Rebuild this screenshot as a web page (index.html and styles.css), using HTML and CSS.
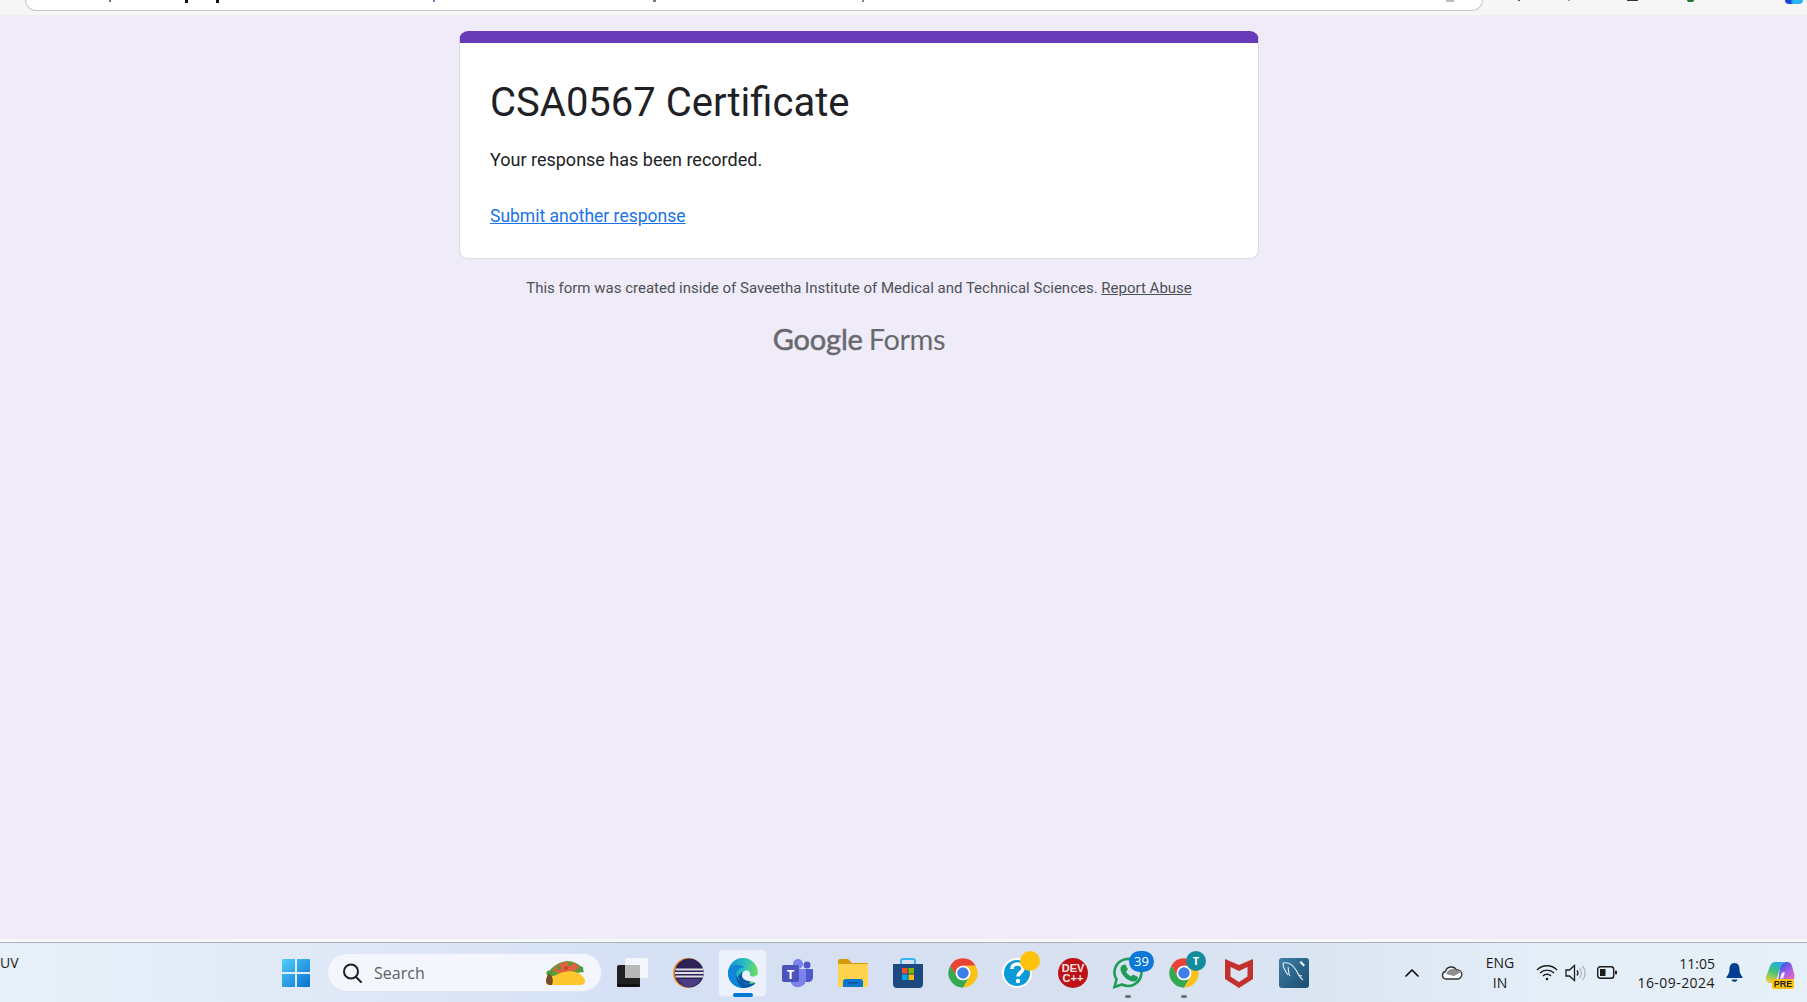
FILE: index.html
```html
<!DOCTYPE html>
<html lang="en">
<head>
<meta charset="utf-8">
<title>CSA0567 Certificate</title>
<link rel="stylesheet" href="styles.css">
</head>
<body>
<div class="browser-strip">
  <div class="address-bar">
    <i class="mark m1"></i><i class="mark m2"></i><i class="mark m3"></i><i class="mark m4"></i><i class="mark m5"></i><i class="mark m6"></i><i class="mark m7"></i>
  </div>
  <i class="mark t1"></i><i class="mark t2"></i><i class="mark t3"></i><i class="mark t4"></i><i class="mark t5"></i>
</div>
<main class="page">
  <section class="card">
    <h1 class="title">CSA0567 Certificate</h1>
    <p class="message">Your response has been recorded.</p>
    <a class="again" href="#">Submit another response</a>
  </section>
  <p class="notice">This form was created inside of Saveetha Institute of Medical and Technical Sciences. <a href="#">Report Abuse</a></p>
  <div class="brand"><span class="brand-g">Google</span> <span class="brand-f">Forms</span></div>
</main>
<div class="taskbar-gap"></div>
<footer class="taskbar">
  <div class="weather">UV</div>
  <div class="task start">
    <svg width="30" height="30" viewBox="0 0 30 30"><defs><linearGradient id="w" x1="0" y1="0" x2="1" y2="1"><stop offset="0" stop-color="#4fd0fb"/><stop offset="1" stop-color="#0a6fd0"/></linearGradient></defs><path fill="url(#w)" d="M1 2a1 1 0 0 1 1-1h12v13H1zM16 1h12a1 1 0 0 1 1 1v12H16zM1 16h13v13H2a1 1 0 0 1-1-1zM16 16h13v12a1 1 0 0 1-1 1H16z"/></svg>
  </div>
  <div class="search">
    <svg class="search-icon" width="22" height="22" viewBox="0 0 22 22" fill="none" stroke="#1f1f1f" stroke-width="2"><circle cx="10" cy="9.500" r="7"/><path d="M15 15l5 5" stroke-linecap="round"/></svg>
    <span class="search-text">Search</span>
    <svg class="taco" width="42" height="26" viewBox="0 0 42 26"><path fill="#5f9a3a" d="M3 17C4 9 13 2 23 1c8 0 15 4 17 11z"/><path fill="#e2603d" d="M9 10c3-5 9-8 15-8 5 0 9 2 11 6L20 16z"/><circle cx="15" cy="8" r="2.200" fill="#4f9a3c"/><circle cx="26" cy="4" r="2" fill="#4f9a3c"/><circle cx="37" cy="9" r="2.400" fill="#4f9a3c"/><circle cx="5" cy="13" r="2.600" fill="#4f9a3c"/><circle cx="22" cy="8" r="1.800" fill="#c9402c"/><path fill="#ffc72e" d="M3 24c-2-3 1-6 7-8 8-5 18-6 24-3 4 2 7 5 7 8 0 3-2 4-5 4H7c-2 0-3 0-4-1z"/><path fill="#7a4a22" d="M2 21c0-3 1-5 3-7 3 1 5 5 3 11H6c-3 0-4-2-4-4z"/></svg>
  </div>
  <div class="tasks">
    <div class="task">
      <svg width="32" height="30" viewBox="0 0 32 30"><rect x="0" y="7" width="23" height="22" rx="2" fill="#222"/><rect x="0" y="26" width="23" height="3" rx="1" fill="#111"/><rect x="8" y="0" width="23" height="20" rx="2" fill="#fff" fill-opacity=".72"/><rect x="8" y="7" width="15" height="13" fill="#b9b9b9"/></svg>
    </div>
    <div class="task">
      <svg width="32" height="32" viewBox="0 0 32 32"><circle cx="16" cy="16" r="15" fill="#f28f1c"/><circle cx="17.200" cy="16" r="14.500" fill="#2c2255"/><path fill="#4b3c85" d="M6 22h23c-2 5-7 8-12 8s-9-3-11-8z"/><path fill="#fff" fill-opacity=".85" d="M3.500 11.500h27.500v2H3.500zM3 15h28.600v2H3zM3.500 18.500h27.500v2H3.500z"/></svg>
    </div>
    <div class="task active">
      <svg width="32" height="32" viewBox="0 0 32 32"><defs><linearGradient id="e1" x1="0" y1=".2" x2="1" y2=".5"><stop offset="0" stop-color="#0f8fdc"/><stop offset=".55" stop-color="#2fc3b8"/><stop offset="1" stop-color="#78e05c"/></linearGradient></defs><circle cx="16" cy="16" r="15" fill="url(#e1)"/><path fill="#0b5aa8" d="M9 17C10 23 16 27 22 27C25 27 27 26 29 25C27 29 21 31 16 31C11 31 8 25 9 17z"/><path fill="#0f86d8" d="M1 16C1 10 6 8 11 8C14 8 16 9 17.500 10.500C12 10 9 14 9 19C9 24 12 28 15 31C7 30.500 1 24 1 16z"/><path fill="#0b5aa8" d="M11 19C11 24 16 27 22 27L24 24L16 20L15 15z"/><path fill="#ecf1fc" d="M15 18.500C15 15.500 17 13.500 19.500 13.500C22 13.500 23.500 15.500 23 18.500C25 20.500 29 20 32 16V26H29C27 25 24.500 24.500 21.500 24C18 23.500 15 21.500 15 18.500z"/></svg>
      <span class="indicator wide"></span>
    </div>
    <div class="task">
      <svg width="32" height="30" viewBox="0 0 32 30"><circle cx="16" cy="6" r="5" fill="#7b83eb"/><circle cx="25" cy="7" r="3.500" fill="#5059c9"/><path fill="#5059c9" d="M21 11h9a1 1 0 0 1 1 1v7c0 3-2 5-5 5h-3z"/><path fill="#7b83eb" d="M9 11h14a1 1 0 0 1 1 1v9a8 8 0 0 1-15 4z"/><rect x="0" y="7" width="17" height="17" rx="2" fill="#4b53bc"/><text x="8.500" y="20.500" class="teams-t">T</text></svg>
    </div>
    <div class="task">
      <svg width="32" height="30" viewBox="0 0 32 30"><path fill="#d49a0a" d="M1 3a2 2 0 0 1 2-2h8l4 4h16v5H1z"/><path fill="#ffd24f" d="M1 6h30v23H1z"/><path fill="#0a78cf" d="M6 29v-4a3 3 0 0 1 3-4h14a3 3 0 0 1 3 4v4z"/><rect x="11" y="24" width="10" height="1.500" fill="#0a4f98"/></svg>
    </div>
    <div class="task">
      <svg width="30" height="32" viewBox="0 0 30 32"><path fill="none" stroke="#35b3ef" stroke-width="2" d="M8 9V4a2 2 0 0 1 2-2h10a2 2 0 0 1 2 2v5"/><path fill="#1c4a80" d="M0 7h30v20a4 4 0 0 1-4 4H4a4 4 0 0 1-4-4z"/><rect x="9" y="11" width="5.500" height="5.500" fill="#f25022"/><rect x="15.500" y="11" width="5.500" height="5.500" fill="#7fba00"/><rect x="9" y="17.500" width="5.500" height="5.500" fill="#00a4ef"/><rect x="15.500" y="17.500" width="5.500" height="5.500" fill="#ffb900"/></svg>
    </div>
    <div class="task">
      <svg width="32" height="32" viewBox="0 0 24 24"><path fill="#ea4335" d="M2.470 6.500A11 11 0 0 1 21.530 6.500H12A5.500 5.500 0 0 0 7.240 14.750z"/><path fill="#34a853" d="M2.470 6.500A11 11 0 0 0 12 23L16.760 14.750A5.500 5.500 0 0 1 7.240 14.750z"/><path fill="#fbc116" d="M12 23A11 11 0 0 0 21.530 6.500H12A5.500 5.500 0 0 1 16.760 14.750z"/><circle cx="12" cy="12" r="5.500" fill="#fff"/><circle cx="12" cy="12" r="4.300" fill="#3d7fe6"/></svg>
    </div>
    <div class="task">
      <svg width="32" height="32" viewBox="0 0 32 32"><circle cx="15" cy="16" r="15" fill="#fff"/><circle cx="15" cy="16" r="13" fill="#0a9ad8"/><path fill="none" stroke="#fff" stroke-width="3.600" d="M10 12c0-3 2-5 5.500-5s5.500 2 5.500 4.500c0 4-5 4-5 8"/><circle cx="16" cy="24" r="2.200" fill="#fff"/></svg>
      <span class="dot-yellow"></span>
    </div>
    <div class="task">
      <svg width="32" height="32" viewBox="0 0 32 32"><circle cx="16" cy="16" r="15" fill="#bd1318"/><text x="16" y="14.500" class="dev">DEV</text><text x="16" y="25" class="dev">C++</text></svg>
    </div>
    <div class="task">
      <svg width="32" height="32" viewBox="0 0 32 32"><path fill="none" stroke="#1f9c55" stroke-width="2.600" d="M2.500 30l2-7.500A13.500 13.500 0 1 1 10 27.500z"/><path fill="#1f9c55" d="M11 8l2.500-.5 2.500 5-2 2c1 2 2.500 3.500 5 5l2-2 5 2.500c0 3-2 4.500-4.500 4.500-6 0-13-7-13-12.500 0-2 1-3.500 2.500-4z"/></svg>
      <span class="indicator"></span>
      <span class="badge blue">39</span>
    </div>
    <div class="task">
      <svg width="32" height="32" viewBox="0 0 24 24"><path fill="#ea4335" d="M2.470 6.500A11 11 0 0 1 21.530 6.500H12A5.500 5.500 0 0 0 7.240 14.750z"/><path fill="#34a853" d="M2.470 6.500A11 11 0 0 0 12 23L16.760 14.750A5.500 5.500 0 0 1 7.240 14.750z"/><path fill="#fbc116" d="M12 23A11 11 0 0 0 21.530 6.500H12A5.500 5.500 0 0 1 16.760 14.750z"/><circle cx="12" cy="12" r="5.500" fill="#fff"/><circle cx="12" cy="12" r="4.300" fill="#3d7fe6"/></svg>
      <span class="indicator"></span>
      <span class="badge teal">T</span>
    </div>
    <div class="task">
      <svg width="28" height="32" viewBox="0 0 28 32"><path fill="#c2312d" d="M0 2l14 6 14-6v20L14 31 0 22zM5.500 10v9.500L14 25l8.500-5.500V10L14 14z"/></svg>
    </div>
    <div class="task">
      <svg width="30" height="30" viewBox="0 0 30 30"><defs><linearGradient id="my" x1="0" y1="0" x2="1" y2="1"><stop offset="0" stop-color="#3d7ea6"/><stop offset="1" stop-color="#1c4b70"/></linearGradient></defs><rect width="30" height="30" rx="3" fill="url(#my)"/><path fill="none" stroke="#e8f0f5" stroke-width="1.100" d="M4 5c5-1 10 2 13 7 2 3 3 7 7 10M4 5c0 4 2 8 5 12M9 9c1 4 0 7 2 9M19 17l4 1"/><path fill="#e8f0f5" d="M22 3l4 4-1.500 1.500-4-4z"/></svg>
    </div>
  </div>
  <div class="tray">
    <div class="tray-item chevron">
      <svg width="16" height="10" viewBox="0 0 16 10" fill="none" stroke="#111" stroke-width="1.700"><path d="M2 8l6-6 6 6" stroke-linecap="round" stroke-linejoin="round"/></svg>
    </div>
    <div class="tray-item cloud">
      <svg width="22" height="14" viewBox="0 0 22 14"><path fill="#fff" stroke="#333" stroke-width="1.400" d="M5 13a3.800 3.800 0 0 1-.5-7.500A6 6 0 0 1 15.500 4 4.500 4.500 0 0 1 17 13z"/><path fill="#8f8f8f" d="M5 8c2-5 8-6.500 10.500-3 1.500-.5 3 0 4 1.500L13 10z"/></svg>
    </div>
    <div class="lang">ENG<br>IN</div>
    <div class="tray-item wifi">
      <svg width="22" height="17" viewBox="0 0 22 17" fill="none" stroke="#1b1b1b" stroke-width="1.400"><path d="M1 6a14 14 0 0 1 20 0M4 9a10 10 0 0 1 14 0M7 12a5.600 5.600 0 0 1 8 0"/><circle cx="11" cy="15" r="1.300" fill="#1b1b1b" stroke="none"/></svg>
    </div>
    <div class="tray-item speaker">
      <svg width="22" height="18" viewBox="0 0 22 18" fill="none" stroke="#1b1b1b" stroke-width="1.300"><path d="M1 6h3.500L9.500 1.500v15L4.500 12H1z"/><path d="M12 6.500a4 4 0 0 1 0 5"/><path d="M14.500 4a7.500 7.500 0 0 1 0 10M17.500 2a10.500 10.500 0 0 1 0 14" stroke="#b0b5bb"/></svg>
    </div>
    <div class="tray-item battery">
      <svg width="20" height="13" viewBox="0 0 20 13"><rect x=".7" y=".7" width="16" height="11.600" rx="2.500" fill="none" stroke="#1b1b1b" stroke-width="1.400"/><rect x="3" y="3" width="5.500" height="7" fill="#1b1b1b"/><rect x="18" y="4.500" width="2" height="4" rx="1" fill="#1b1b1b"/></svg>
    </div>
    <div class="clock">11:05<br><span class="date">16-09-2024</span></div>
    <div class="tray-item bell">
      <svg width="17" height="19" viewBox="0 0 17 19"><path fill="#003e92" d="M8.500 0C5 0 3.500 3 3.500 6c0 4-1.500 6-3 8v1h16v-1c-1.500-2-3-4-3-8 0-3-1.500-6-5-6z"/><path fill="#003e92" d="M5.500 16.500h6c-.5 1.500-1.500 2.300-3 2.300s-2.500-.8-3-2.300z"/></svg>
    </div>
    <div class="tray-item copilot">
      <svg width="30" height="24" viewBox="0 0 30 24"><defs><linearGradient id="c1" x1=".6" y1="0" x2=".2" y2="1"><stop offset="0" stop-color="#27a8e8"/><stop offset=".45" stop-color="#3fc27b"/><stop offset="1" stop-color="#f5d03b"/></linearGradient><linearGradient id="c2" x1=".2" y1="0" x2=".9" y2="1"><stop offset="0" stop-color="#2458e6"/><stop offset=".5" stop-color="#a05ee8"/><stop offset="1" stop-color="#f56ab0"/></linearGradient></defs><path fill="url(#c2)" d="M15 7C16 3 18 1 22 1C25 1 26 2.500 27 5L29.500 14C30 17 28 20 25 20H13z"/><path fill="url(#c1)" d="M10 1H22C18 1 16.500 3 15.500 6L12 17C11 20.500 9 22 6 22H5C2 22 0 19.500 1 16L5 5C6 2.500 8 1 10 1z"/><path fill="#f4f6fc" d="M17 11.500h3l-2 6h-3z"/></svg>
      <span class="pre">PRE</span>
    </div>
  </div>
</footer>
</body>
</html>
```
FILE: styles.css
```css
* { box-sizing: border-box; }
html, body { margin: 0; height: 100%; }
body {
  width: 1807px;
  height: 1002px;
  overflow: hidden;
  display: flex;
  flex-direction: column;
  background: #efebf8;
  font-family: Roboto, "Liberation Sans", sans-serif;
}

/* sliver of the browser chrome */
.browser-strip {
  position: relative;
  height: 15px;
  flex: none;
  background: #f6f6f6;
  padding-left: 25px;
}
.address-bar {
  position: relative;
  width: 1458px;
  height: 11px;
  background: #fff;
  border: 1px solid #c9c9c9;
  border-top: 0;
  border-radius: 0 0 16px 16px;
}
.mark { position: absolute; top: 0; height: 2px; width: 2px; background: #777; }
.m1 { left: 83px; }
.m2 { left: 159px; background: #111; width: 3px; height: 3px; }
.m3 { left: 190px; background: #111; width: 3px; height: 3px; }
.m4 { left: 407px; background: #6b88b5; }
.m5 { left: 627px; background: #777; width: 3px; }
.m6 { left: 836px; background: #8a7a90; }
.m7 { left: 1420px; background: #bbb; width: 8px; }
.t1 { left: 1518px; width: 2px; height: 1px; background: #555; }
.t2 { left: 1568px; width: 2px; height: 1px; background: #999; }
.t3 { left: 1627px; width: 11px; height: 1px; background: #333; }
.t4 { left: 1687px; width: 7px; height: 2px; background: #187a2a; border-radius: 0 0 4px 4px; }
.t5 { left: 1785px; width: 18px; height: 4px; background: linear-gradient(90deg, #1c45d8 30%, #29b6f6 45%); border-radius: 0 0 6px 6px; }

/* form confirmation */
.page {
  flex: 1;
  display: flex;
  flex-direction: column;
  align-items: center;
  padding: 16px 89px 0 0;
  min-height: 0;
}
.card {
  width: 800px;
  height: 228px;
  padding: 50px 30px 0;
  background: #fff;
  border: 1px solid #dadce0;
  border-top: 12px solid #673ab7;
  border-radius: 9px;
}
.title {
  margin: -12px 0 0;
  font-size: 40px;
  font-weight: 400;
  line-height: 44px;
  color: #202124;
}
.message {
  margin: 24px 0 0;
  font-size: 18px;
  line-height: 22px;
  color: #202124;
}
.again {
  display: block;
  margin-top: 34px;
  font-size: 17.500px;
  line-height: 22px;
  color: #1a73e8;
  text-decoration: underline;
}
.notice {
  margin: 19px 0 0;
  font-size: 15px;
  line-height: 20px;
  color: #4d5156;
}
.notice a { color: inherit; text-decoration: underline; }
.brand {
  margin-top: 21px;
  display: flex;
  gap: 6px;
  align-items: baseline;
  color: #68696e;
  font-family: Lato, sans-serif;
  font-size: 29px;
  line-height: 40px;
}
.brand-g { -webkit-text-stroke: .5px #68696e; letter-spacing: -.2px; }
.brand-f { letter-spacing: -.4px; }

/* Windows taskbar */
.taskbar-gap { height: 3px; flex: none; background: #f8f8f8; }
.taskbar {
  height: 60px;
  flex: none;
  display: flex;
  align-items: center;
  border-top: 1px solid #aab0b8;
  background: linear-gradient(90deg, #e8f1f9 0%, #dfe9f7 18%, #d5e0f5 35%, #d8e0f0 58%, #dae5f3 72%, #e4eef8 85%, #e6f0f9 100%);
  font-family: "Open Sans", "Noto Sans", sans-serif;
  color: #1b1b1b;
}
.weather {
  width: 268px;
  flex: none;
  align-self: flex-start;
  padding-top: 10px;
  font-size: 14px;
  line-height: 20px;
}
.task {
  position: relative;
  width: 55.100px;
  height: 58px;
  flex: none;
  display: flex;
  align-items: center;
  justify-content: center;
}
.task svg { display: block; }
.search {
  width: 275px;
  height: 39px;
  margin-left: 4px;
  flex: none;
  display: flex;
  align-items: center;
  padding: 0 15px 0 13px;
  background: #f3f6fd;
  border: 1px solid #dfe5f2;
  border-radius: 20px;
}
.search-text { margin-left: 11px; font-size: 16px; color: #5e6063; flex: 1; }
.taco { display: block; }
.tasks { display: flex; margin-left: 3px; }
.task.active::before {
  content: "";
  position: absolute;
  left: 3px;
  right: 3px;
  top: 5px;
  bottom: 5px;
  background: #ecf1fc;
  border: 1px solid #dde3f1;
  border-radius: 5px;
}
.task.active svg { position: relative; }
.indicator {
  position: absolute;
  left: 50%;
  bottom: 4px;
  width: 6px;
  height: 3px;
  margin-left: -3px;
  background: #6d7076;
  border-radius: 2px;
}
.indicator.wide { width: 20px; height: 4px; margin-left: -10px; bottom: 5px; background: #0078d4; }
.dot-yellow {
  position: absolute;
  top: 7px;
  left: 29px;
  width: 20px;
  height: 20px;
  border-radius: 50%;
  background: #ffc30e;
}
.badge {
  position: absolute;
  top: 7px;
  left: 28px;
  width: 25px;
  height: 21px;
  border-radius: 11px;
  text-align: center;
  color: #fff;
  font-size: 13px;
  line-height: 21px;
}
.badge.blue { background: #0a78d8; }
.badge.teal { left: 30px; width: 20px; height: 20px; border-radius: 50%; background: #138c9e; font-size: 11px; font-weight: 700; line-height: 20px; }
.teams-t { font: 700 13px "Open Sans", sans-serif; fill: #fff; text-anchor: middle; }
.dev { font: 700 11px "Liberation Sans", sans-serif; fill: #f5e5e5; text-anchor: middle; }

.tray {
  margin-left: auto;
  width: 415px;
  flex: none;
  display: flex;
  align-items: center;
}
.tray-item { display: flex; align-items: center; justify-content: center; position: relative; }
.tray-item svg { display: block; }
.chevron, .cloud { width: 40px; }
.lang {
  width: 56px;
  text-align: center;
  font-size: 14px;
  line-height: 20px;
}
.wifi { width: 28px; margin-left: 5px; }
.speaker { width: 28px; margin-left: 1px; }
.battery { width: 28px; margin-left: 3px; }
.clock {
  width: 94px;
  text-align: right;
  font-size: 14px;
  line-height: 19px;
}
.date { letter-spacing: .45px; }
.bell { width: 24px; margin-left: 7px; }
.copilot { width: 40px; margin-left: 14px; height: 36px; }
.pre {
  position: absolute;
  right: 6px;
  bottom: 2px;
  width: 22px;
  height: 10px;
  background: #ffc20e;
  border-radius: 2px;
  text-align: center;
  font: 700 9px/10px "Liberation Sans", sans-serif;
  color: #222;
}
```
